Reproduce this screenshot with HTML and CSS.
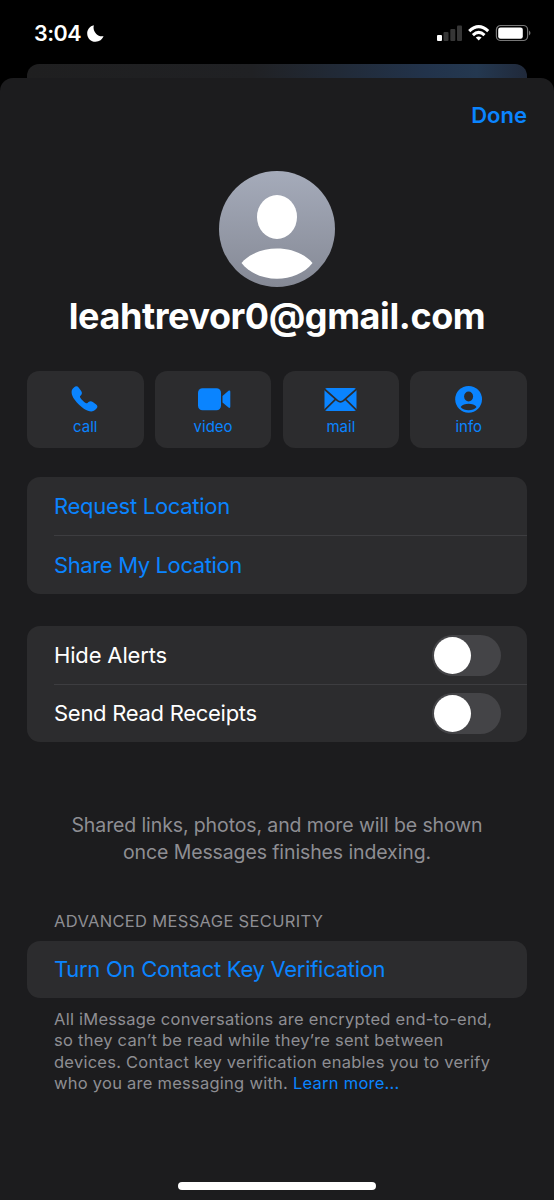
FILE: index.html
```html
<!DOCTYPE html>
<html lang="en">
<head>
<meta charset="utf-8">
<title>Contact details</title>
<link rel="stylesheet" href="styles.css">
</head>
<body>
<div class="screen">
  <header class="status">
    <div class="status-left">
      <span class="time">3:04</span>
      <svg class="moon" width="17" height="17" viewBox="0 0 17 17"><path d="M6.800 .3C2.800 1.200 .2 4.600 .2 8.500C.2 13.200 3.900 16.800 8.500 16.800C12.300 16.800 15.500 14.500 16.500 11.100C13.800 11.700 11.300 10.900 9.300 8.900C7 6.600 6 3.700 6.800 .3Z" fill="#fff"/></svg>
    </div>
    <svg class="indicators" width="96" height="18" viewBox="0 0 96 18">
      <rect x="1" y="11" width="5" height="6" rx="1" fill="#fff"/>
      <rect x="7.500" y="8" width="5" height="9" rx="1" fill="#363636"/>
      <rect x="14.300" y="5" width="5" height="12" rx="1" fill="#363636"/>
      <rect x="21" y="1.500" width="5" height="15.500" rx="1" fill="#363636"/>
      <g fill="none" stroke="#fff" stroke-width="3">
        <path d="M33.200 7.200Q42.700 -2 52.200 7.200"/>
        <path d="M36.900 11.100Q42.700 5.700 48.500 11.100"/>
      </g>
      <path d="M39.800 13.600Q42.700 11.300 45.600 13.600L42.700 16.600Z" fill="#fff"/>
      <rect x="60.400" y="1.500" width="31.200" height="15" rx="4.300" fill="none" stroke="#777" stroke-width="1.200"/>
      <rect x="62.200" y="3.400" width="24.600" height="11.300" rx="2.300" fill="#fff"/>
      <path d="M93 6.500Q96 9 93 11.500Z" fill="#777"/>
    </svg>
  </header>
  <div class="back-card"></div>
  <main class="sheet">
    <div class="toolbar"><span class="done">Done</span></div>
    <svg class="avatar" width="116" height="116" viewBox="0 0 116 116">
      <defs><linearGradient id="av" x1="0" y1="0" x2="0" y2="1"><stop offset="0" stop-color="#a5abba"/><stop offset="1" stop-color="#858995"/></linearGradient></defs>
      <circle cx="58" cy="58" r="58" fill="url(#av)"/>
      <ellipse cx="58" cy="46" rx="20" ry="22" fill="#fff"/>
      <path d="M22.500 92C39 72.700 77 72.700 93.500 92C77 113 39 113 22.500 92Z" fill="#fff"/>
    </svg>
    <h1 class="name"><span>leahtrevor0@gmail.com</span></h1>
    <nav class="actions">
      <div class="action">
        <svg width="36" height="30" viewBox="0 0 36 30"><path d="M7.200 3.300C8.600 1.900 10.500 2 11.600 3.500L14.200 7.100C15.300 8.700 15.100 10.200 14 11.300L13.200 12.100C12.800 12.600 12.900 13.100 13.300 13.700C14.500 15.600 16.700 17.700 18.700 18.900C19.400 19.300 20 19.300 20.500 18.900L21.500 18.100C22.800 17.100 24.400 17 25.800 18L29.200 20.500C30.700 21.600 30.800 23.300 29.500 24.600L28 26.100C25.600 28.300 21.600 27.700 17.200 25C14 23 10 19.200 7.500 15.600C4.400 11 3.700 6.800 5.900 4.500Z" fill="#0a84ff"/></svg>
        <span>call</span>
      </div>
      <div class="action">
        <svg width="36" height="30" viewBox="0 0 36 30"><rect x="3" y="4.200" width="23" height="22" rx="4.500" fill="#0a84ff"/><path d="M27.500 12L33.500 6.700Q35.300 5.800 35.300 7.700V22.500Q35.300 24.700 33.500 23.500L27.500 18.500Z" fill="#0a84ff"/></svg>
        <span>video</span>
      </div>
      <div class="action">
        <svg width="36" height="30" viewBox="0 0 36 30"><rect x="1.500" y="4" width="32" height="23" rx="2.500" fill="#0a84ff"/><path d="M1.300 5L14.500 16.700Q17.500 19.200 20.500 16.700L33.700 5M1.500 26.200L12.700 15.200M33.500 26.200L22.300 15.200" fill="none" stroke="#2c2c2e" stroke-width="1.700"/></svg>
        <span>mail</span>
      </div>
      <div class="action">
        <svg width="36" height="30" viewBox="0 0 36 30"><circle cx="17.600" cy="15.300" r="13.400" fill="#0a84ff"/><ellipse cx="17.600" cy="12.500" rx="4.500" ry="5" fill="#2c2c2e"/><path d="M9.600 22.900C12.800 18.700 22.400 18.700 25.600 22.900C22.100 27.200 13.100 27.200 9.600 22.900Z" fill="#2c2c2e"/></svg>
        <span>info</span>
      </div>
    </nav>
    <section class="group location">
      <div class="row link"><span>Request Location</span></div>
      <div class="row link"><span class="tight">Share My Location</span></div>
    </section>
    <section class="group alerts">
      <div class="row"><span class="loose">Hide Alerts</span><span class="toggle"></span></div>
      <div class="row"><span>Send Read Receipts</span><span class="toggle"></span></div>
    </section>
    <p class="indexing">Shared links, photos, and more will be shown<br>once Messages finishes indexing.</p>
    <h2 class="caption">ADVANCED MESSAGE SECURITY</h2>
    <section class="group security">
      <div class="row link"><span>Turn On Contact Key Verification</span></div>
    </section>
    <p class="footnote">All iMessage conversations are encrypted end-to-end,<br>so they can’t be read while they’re sent between<br>devices. Contact key verification enables you to verify<br>who you are messaging with. <a>Learn more...</a></p>
    <div class="home"></div>
  </main>
</div>
</body>
</html>
```
FILE: styles.css
```css
* { box-sizing: border-box; }
body { margin: 0; background: #000; color: #fff; font-family: Inter, "Liberation Sans", sans-serif; }
svg { display: block; }
.screen { width: 554px; height: 1200px; overflow: hidden; display: flex; flex-direction: column; }
.status { height: 64px; flex: none; display: flex; justify-content: space-between; align-items: flex-start; padding: 24px 22px 0 34px; }
.status-left { display: flex; gap: 6px; }
.time { font-size: 21.500px; line-height: 19px; font-weight: 600; letter-spacing: -.5px; }
.moon { margin-top: 1px; }
.back-card { height: 14px; flex: none; margin: 0 27px; border-radius: 12px 12px 0 0; background: linear-gradient(90deg, #1f1f20 0%, #202124 45%, #22334b 80%, #243850 90%, #20293a 100%); }
.sheet { flex: 1; display: flex; flex-direction: column; background: #1c1c1e; border-radius: 13px 13px 0 0; padding: 0 27px; }
.toolbar { height: 93px; display: flex; justify-content: flex-end; padding-top: 23px; }
.done { color: #0a84ff; font-size: 22px; line-height: 29px; font-weight: 600; letter-spacing: 0; }
.avatar { align-self: center; }
.name { margin: 7px 0 0; height: 44px; line-height: 44px; text-align: center; font-size: 36px; font-weight: 700; letter-spacing: -.42px; white-space: nowrap; }
.actions { margin-top: 32.500px; height: 77.500px; display: grid; grid-template-columns: repeat(4, 1fr); gap: 11.300px; }
.action { background: #2c2c2e; border-radius: 12px; display: flex; flex-direction: column; align-items: center; padding-top: 13.500px; color: #0a84ff; font-size: 15px; line-height: 20px; }
.action span { margin-top: 3px; }
.group { background: #2c2c2e; border-radius: 13px; }
.location { margin-top: 29px; }
.alerts { margin-top: 32px; }
.row { height: 58.300px; margin-left: 27px; padding-right: 26px; display: flex; align-items: center; justify-content: space-between; font-size: 22px; line-height: 28px; letter-spacing: -.28px; white-space: nowrap; }
.row + .row { border-top: 1px solid #3d3d40; }
.alerts .row:first-child { padding-top: 1px; }
.alerts .row:last-child { padding-bottom: 1px; }
.row .tight { letter-spacing: -.38px; }
.row .loose { letter-spacing: -.16px; }
.link, a { color: #0a84ff; }
.toggle { width: 69px; height: 41px; border-radius: 21px; background: #444447; padding: 2px; display: flex; }
.toggle::before { content: ""; width: 37px; height: 37px; border-radius: 50%; background: #fff; }
.indexing { margin: 70px 0 0; text-align: center; font-size: 19.500px; line-height: 26.800px; letter-spacing: -.11px; color: #8e8e93; white-space: nowrap; }
.caption { margin: 45px 0 0 27px; font-size: 16.500px; line-height: 20px; font-weight: 400; letter-spacing: .33px; color: #8e8e93; white-space: nowrap; }
.security { margin-top: 10px; }
.security .row { height: 57px; }
.footnote { margin: 11px 0 0 27px; font-size: 16.500px; line-height: 21.400px; letter-spacing: .25px; color: #8e8e93; white-space: nowrap; }
.home { width: 198px; height: 8px; border-radius: 4px; background: #fff; margin: auto auto 10px; flex: none; }
```
